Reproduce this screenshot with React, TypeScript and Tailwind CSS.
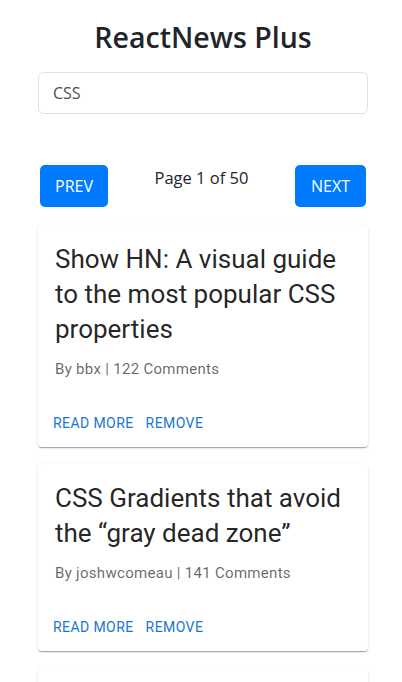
import React from 'react';

interface Story {
  id: number;
  title: string;
  author: string;
  comments: number;
}

const STORIES: Story[] = [
  { id: 1, title: 'Show HN: A visual guide to the most popular CSS properties', author: 'bbx', comments: 122 },
  { id: 2, title: 'CSS Gradients that avoid the \u201cgray dead zone\u201d', author: 'joshwcomeau', comments: 141 },
  { id: 3, title: 'Modern CSS Solutions', author: 'ada', comments: 64 },
];

const bootFont = "font-['Open_Sans','Noto_Sans',sans-serif]";

function StoryCard({ story }: { story: Story }) {
  return (
    <div className="bg-white rounded-[4px] shadow-[0_2px_1px_-1px_rgba(0,0,0,0.2),0_1px_1px_0_rgba(0,0,0,0.14),0_1px_3px_0_rgba(0,0,0,0.12)] font-['Roboto',sans-serif]">
      <div className="px-[17px] pt-[17px] pb-[19px]">
        <h2 className="text-[26px] leading-[35px] text-black/[0.87]">{story.title}</h2>
        <p className="mt-3 text-[15px] leading-[21px] text-black/60 tracking-[0.02em]">
          By {story.author} | {story.comments} Comments
        </p>
      </div>
      <div className="flex items-center gap-[2px] py-2 pl-[10px] pr-2">
        <button className="px-[5px] py-1 text-[14px] leading-[24px] uppercase tracking-[0.03em] text-[#1976d2]">
          Read More
        </button>
        <button className="px-[5px] py-1 text-[14px] leading-[24px] uppercase tracking-[0.03em] text-[#1976d2]">
          Remove
        </button>
      </div>
    </div>
  );
}

export default function App() {
  return (
    <div className="min-h-screen bg-white">
      <div className="ml-[38px] w-[330px] pt-[18px]">
        <h1 className={`${bootFont} text-center text-[28.5px] leading-[38px] font-semibold text-[#212529]`}>
          ReactNews Plus
        </h1>
        <input
          className={`${bootFont} mt-4 block w-full h-[42px] rounded-[6px] border border-[#dee2e6] px-[14px] text-base text-[#495057] outline-none`}
          defaultValue="CSS"
        />
        <div className="mt-[51px] flex items-start justify-between px-[2px]">
          <button className={`${bootFont} h-[42px] px-[15px] rounded-[5px] bg-[#007bff] text-white text-base`}>PREV</button>
          <span className={`${bootFont} pt-px text-[16.5px] leading-6 text-[#212529]`}>Page 1 of 50</span>
          <button className={`${bootFont} h-[42px] px-[16px] rounded-[5px] bg-[#007bff] text-white text-base`}>NEXT</button>
        </div>
        <div className="mt-[18px] flex flex-col gap-[17px] pb-4">
          {STORIES.map((s) => (
            <StoryCard key={s.id} story={s} />
          ))}
        </div>
      </div>
    </div>
  );
}
